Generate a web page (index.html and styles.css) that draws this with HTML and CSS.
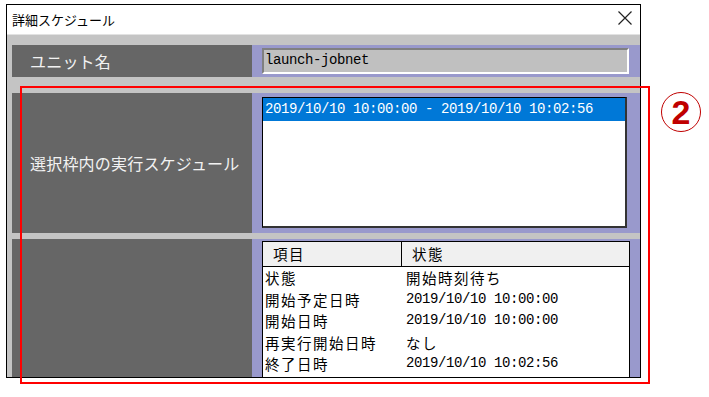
FILE: index.html
```html
<!DOCTYPE html>
<html lang="ja">
<head>
<meta charset="utf-8">
<link rel="stylesheet" href="styles.css">
</head>
<body>
<div class="window">
  <div class="titlebar">
    <span class="title">詳細スケジュール</span>
    <svg class="close" width="16" height="16" viewBox="0 0 16 16"><path d="M1.5 1.5 L14.5 14.5 M14.5 1.5 L1.5 14.5" stroke="#222" stroke-width="1.2" fill="none"/></svg>
  </div>
  <div class="content">
    <div class="row row-unit">
      <div class="label">ユニット名</div>
      <div class="panel"><div class="input mono">launch-jobnet</div></div>
    </div>
    <div class="row row-sched">
      <div class="label">選択枠内の実行スケジュール</div>
      <div class="panel">
        <div class="listbox">
          <div class="item selected mono">2019/10/10 10:00:00 - 2019/10/10 10:02:56</div>
        </div>
      </div>
    </div>
    <div class="row row-detail">
      <div class="label"></div>
      <div class="panel">
        <div class="table">
          <div class="thead">
            <div class="th th1">項目</div>
            <div class="th th2">状態</div>
          </div>
          <div class="tr"><div class="td1">状態</div><div class="td2">開始時刻待ち</div></div>
          <div class="tr"><div class="td1">開始予定日時</div><div class="td2 mono">2019/10/10 10:00:00</div></div>
          <div class="tr"><div class="td1">開始日時</div><div class="td2 mono">2019/10/10 10:00:00</div></div>
          <div class="tr"><div class="td1">再実行開始日時</div><div class="td2">なし</div></div>
          <div class="tr"><div class="td1">終了日時</div><div class="td2 mono">2019/10/10 10:02:56</div></div>
        </div>
      </div>
    </div>
  </div>
</div>
<div class="annot-box"></div>
<div class="annot-num">2</div>
</body>
</html>
```
FILE: styles.css
```css
html, body {
  margin: 0;
  padding: 0;
  background: #ffffff;
}
body {
  position: relative;
  width: 709px;
  height: 397px;
  overflow: hidden;
  font-family: "Noto Sans CJK JP", sans-serif;
}
.window {
  margin: 4px 0 0 6px;
  width: 635px;
  height: 374px;
  box-sizing: border-box;
  border: 1px solid #000;
  overflow: hidden;
  background: #c4c4c4;
}
.titlebar {
  height: 30px;
  background: #ffffff;
  display: flex;
  align-items: center;
  justify-content: space-between;
  padding: 0 7px 0 5px;
  box-sizing: border-box;
  border-bottom: 1px solid #e2e2e2;
}
.title {
  font-size: 13px;
  color: #000;
  line-height: 1;
  margin-top: -1px;
}
.close {
  display: block;
  margin-top: -3px;
}
.content {
  padding: 10px 0 0 5px;
  display: flex;
  flex-direction: column;
}
.row {
  display: grid;
  grid-template-columns: 240px 1fr;
}
.row-unit { height: 32px; }
.row-sched { height: 140px; margin-top: 16px; }
.row-detail { height: 140px; margin-top: 6px; }
.label {
  background: #666666;
  color: #f2f2f2;
  font-size: 16px;
  display: flex;
  align-items: center;
  padding-left: 18px;
  letter-spacing: 0.2px;
}
.panel {
  background: #9999cc;
}
.mono {
  font-family: "Liberation Mono", monospace;
  font-size: 14px;
  letter-spacing: -0.4px;
}
.row-unit .panel {
  padding: 3px 11px 0 10px;
}
.input {
  height: 26px;
  box-sizing: border-box;
  background: #c0c0c0;
  border-top: 2px solid #808080;
  border-left: 2px solid #808080;
  border-right: 2px solid #ffffff;
  border-bottom: 2px solid #ffffff;
  color: #000;
  padding-left: 1px;
  line-height: 21px;
}
.row-sched .panel {
  padding: 4px 13px 5px 10px;
}
.listbox {
  height: 131px;
  box-sizing: border-box;
  background: #ffffff;
  border: 1px solid #000;
  border-right: 2px solid #333;
  border-bottom: 2px solid #333;
}
.item {
  height: 23px;
  line-height: 23px;
  padding-left: 2px;
}
.item.selected {
  background: #0078d7;
  color: #ffffff;
}
.row-detail .panel {
  padding: 2px 10px 0 10px;
}
.table {
  background: #ffffff;
  border: 1px solid #000;
  border-bottom: none;
  height: 200px;
  font-size: 14.5px;
  letter-spacing: 1.5px;
  color: #000;
}
.thead {
  display: grid;
  grid-template-columns: 139px 1fr;
  height: 24px;
  background: #f0f0f0;
  border-bottom: 1px solid #000;
}
.th {
  line-height: 24px;
  padding-left: 10px;
}
.th1 {
  border-right: 1px solid #000;
}
.tr {
  display: grid;
  grid-template-columns: 140px 1fr;
  height: 21.5px;
  line-height: 21.5px;
  overflow: hidden;
}
.td1 {
  padding-left: 2px;
  white-space: nowrap;
}
.td2 {
  padding-left: 3px;
}
.td2.mono {
  letter-spacing: -0.4px;
}
.annot-box {
  position: absolute;
  left: 20px;
  top: 86px;
  width: 630px;
  height: 298px;
  box-sizing: border-box;
  border: 2px solid #ff0000;
}
.annot-num {
  position: absolute;
  left: 661px;
  top: 92px;
  width: 40px;
  height: 40px;
  box-sizing: border-box;
  border: 1px solid #c00000;
  border-radius: 50%;
  color: #c00000;
  font-family: "Liberation Sans", sans-serif;
  font-weight: bold;
  font-size: 34px;
  line-height: 38px;
  text-align: center;
}
```
